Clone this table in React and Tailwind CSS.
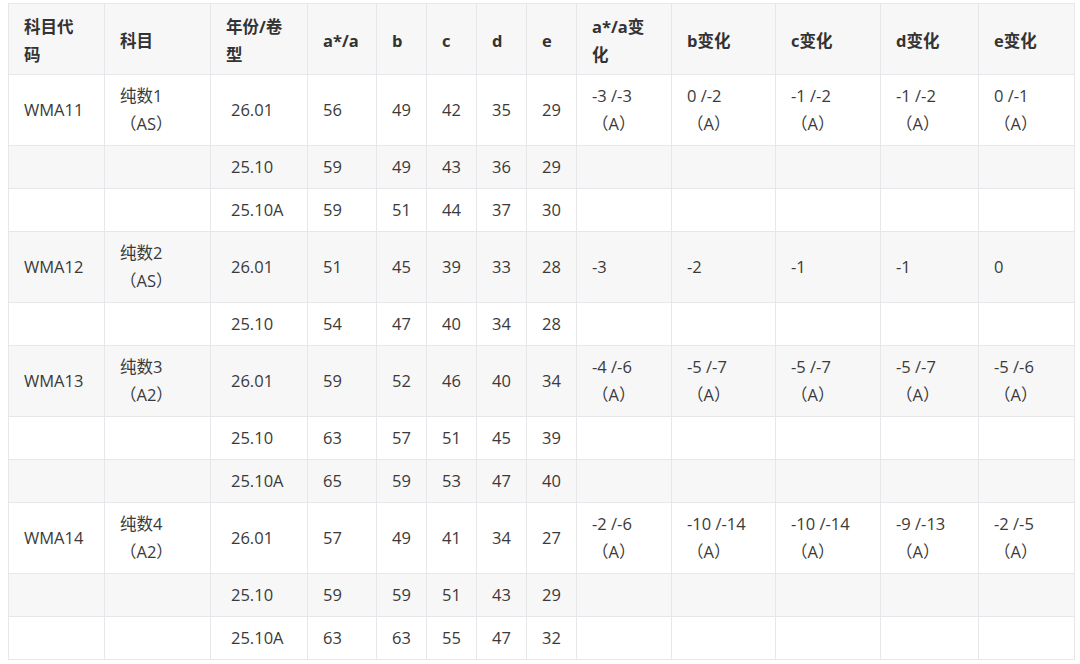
import React from "react";

const headers = [
  ["科目代", "码"],
  ["科目"],
  ["年份/卷", "型"],
  ["a*/a"],
  ["b"],
  ["c"],
  ["d"],
  ["e"],
  ["a*/a变", "化"],
  ["b变化"],
  ["c变化"],
  ["d变化"],
  ["e变化"],
];

const widths = ["w-[96px]", "w-[106px]", "w-[97px]", "w-[69px]", "w-[50px]", "w-[50px]", "w-[50px]", "w-[50px]", "w-[95px]", "w-[104px]", "w-[105px]", "w-[98px]", "w-[96px]"];

const rows = [
  { code: "WMA11", name: "纯数1", tag: "（AS）", year: "26.01", v: [56, 49, 42, 35, 29], ch: ["-3 /-3", "0 /-2", "-1 /-2", "-1 /-2", "0 /-1"], a: true },
  { year: "25.10", v: [59, 49, 43, 36, 29] },
  { year: "25.10A", v: [59, 51, 44, 37, 30] },
  { code: "WMA12", name: "纯数2", tag: "（AS）", year: "26.01", v: [51, 45, 39, 33, 28], ch: ["-3", "-2", "-1", "-1", "0"], a: false },
  { year: "25.10", v: [54, 47, 40, 34, 28] },
  { code: "WMA13", name: "纯数3", tag: "（A2）", year: "26.01", v: [59, 52, 46, 40, 34], ch: ["-4 /-6", "-5 /-7", "-5 /-7", "-5 /-7", "-5 /-6"], a: true },
  { year: "25.10", v: [63, 57, 51, 45, 39] },
  { year: "25.10A", v: [65, 59, 53, 47, 40] },
  { code: "WMA14", name: "纯数4", tag: "（A2）", year: "26.01", v: [57, 49, 41, 34, 27], ch: ["-2 /-6", "-10 /-14", "-10 /-14", "-9 /-13", "-2 /-5"], a: true },
  { year: "25.10", v: [59, 59, 51, 43, 29] },
  { year: "25.10A", v: [63, 63, 55, 47, 32] },
];

const cell = "border border-[#e5e7eb] px-[15px] py-[7px] align-middle text-left";

export default function App() {
  return (
    <div
      className="bg-white w-[1080px] h-[664px] pt-[3px] pl-[8px] text-[16.5px] leading-[28px] text-[#3a3a3a]"
      style={{ fontFamily: '"Open Sans", "Noto Sans CJK SC", sans-serif' }}
    >
      <table className="table-fixed border-collapse w-[1066px]">
        <colgroup>
          {widths.map((w, i) => (
            <col key={i} className={w} />
          ))}
        </colgroup>
        <thead>
          <tr className="bg-[#f7f7f7]">
            {headers.map((h, i) => (
              <th key={i} className={`${cell} pt-[9px] pb-[5px] font-bold text-[#333333]`}>
                {h.map((line, j) => (
                  <div key={j}>{line}</div>
                ))}
              </th>
            ))}
          </tr>
        </thead>
        <tbody>
          {rows.map((r, i) => (
            <tr key={i} className={i % 2 === 1 ? "bg-[#f7f7f7]" : "bg-white"}>
              <td className={cell}>{r.code}</td>
              <td className={cell}>
                {r.name && (
                  <>
                    <div>{r.name}</div>
                    <div>{r.tag}</div>
                  </>
                )}
              </td>
              <td className={`${cell} pl-[20px]`}>{r.year}</td>
              {r.v.map((n, j) => (
                <td key={j} className={cell}>{n}</td>
              ))}
              {[0, 1, 2, 3, 4].map((j) => (
                <td key={j} className={cell}>
                  {r.ch && (
                    <>
                      <div>{r.ch[j]}</div>
                      {r.a && <div>（A）</div>}
                    </>
                  )}
                </td>
              ))}
            </tr>
          ))}
        </tbody>
      </table>
    </div>
  );
}
